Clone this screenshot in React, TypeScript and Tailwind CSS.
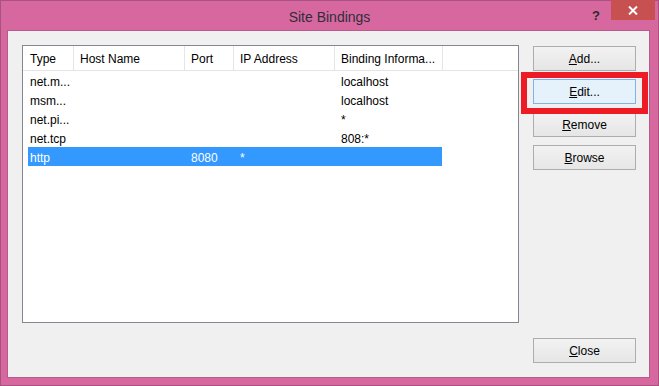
const font = { fontFamily: '"Liberation Sans", Arial, sans-serif' };

type Row = {
  type: string;
  host: string;
  port: string;
  ip: string;
  binding: string;
  selected?: boolean;
};

const rows: Row[] = [
  { type: "net.m...", host: "", port: "", ip: "", binding: "localhost" },
  { type: "msm...", host: "", port: "", ip: "", binding: "localhost" },
  { type: "net.pi...", host: "", port: "", ip: "", binding: "*" },
  { type: "net.tcp", host: "", port: "", ip: "", binding: "808:*" },
  { type: "http", host: "", port: "8080", ip: "*", binding: "", selected: true },
];

function DialogButton({
  label,
  hotkey,
  focused,
}: {
  label: string;
  hotkey: string;
  focused?: boolean;
}) {
  return (
    <button
      className={
        "w-[103px] h-[25px] flex items-center justify-center text-[12px] text-black border " +
        (focused
          ? "border-[#7EB4EA] bg-[#E5F1FB]"
          : "border-[#ADADAD] bg-gradient-to-b from-[#F2F2F2] to-[#E6E6E6]")
      }
    >
      <span className="underline">{hotkey}</span>
      {label}
    </button>
  );
}

export default function App() {
  return (
    <div className="w-[659px] h-[386px] bg-white" style={font}>
      <div className="w-[659px] h-[386px] bg-[#D7689F] border border-[#A9527F] flex flex-col">
        {/* TITLE BAR */}
        <div className="h-[29px] flex items-start">
          <div className="w-[77px]" />
          <div className="flex-1 text-center text-[14px] text-[#2E2E3A] pt-[6px]">
            Site Bindings
          </div>
          <div className="w-[77px] flex items-start">
            <span className="w-[30px] text-center text-[13px] font-bold text-[#2A2A2A] pt-[5px]">?</span>
            <div className="w-[44px] h-[20px] -mt-[1px] bg-[#C75050] flex items-center justify-center">
              <svg width="10" height="9" viewBox="0 0 10 9">
                <path d="M1 0.5 L9 8.5 M9 0.5 L1 8.5" stroke="white" strokeWidth="2" />
              </svg>
            </div>
          </div>
        </div>

        {/* CLIENT */}
        <div className="ml-[6px] w-[643px] h-[348px] bg-[#F0F0F0] border border-[#B85A8C] flex pl-[14px] pt-[14px] pb-[14px] relative">
          {/* LIST */}
          <div className="w-[497px] h-[278px] bg-white border border-[#828790] text-[12px] text-black">
            <div className="h-[25px] flex border-b border-[#E5E5E5]">
              <div className="w-[51px] pl-[7px] pt-[2px] border-r border-[#E5E5E5] flex items-center">Type</div>
              <div className="w-[111px] pl-[6px] pt-[2px] border-r border-[#E5E5E5] flex items-center">Host Name</div>
              <div className="w-[49px] pl-[6px] pt-[2px] border-r border-[#E5E5E5] flex items-center">Port</div>
              <div className="w-[101px] pl-[6px] pt-[2px] border-r border-[#E5E5E5] flex items-center">IP Address</div>
              <div className="w-[108px] pl-[6px] pt-[2px] border-r border-[#E5E5E5] flex items-center">Binding Informa...</div>
            </div>
            {rows.map((r, i) => (
              <div
                key={i}
                className={
                  "h-[19px] ml-[5px] w-[414px] flex items-center pt-[2px] " +
                  (r.selected ? "bg-[#3399FF] text-white" : "")
                }
              >
                <div className="w-[46px] pl-[2px]">{r.type}</div>
                <div className="w-[111px] pl-[6px]">{r.host}</div>
                <div className="w-[49px] pl-[6px]">{r.port}</div>
                <div className="w-[101px] pl-[6px]">{r.ip}</div>
                <div className="w-[107px] pl-[6px]">{r.binding}</div>
              </div>
            ))}
          </div>

          {/* BUTTONS */}
          <div className="ml-[14px] pt-[1px] flex flex-col gap-[8px]">
            <DialogButton hotkey="A" label="dd..." />
            <DialogButton hotkey="E" label="dit..." focused />
            <DialogButton hotkey="R" label="emove" />
            <DialogButton hotkey="B" label="rowse" />
            <div className="mt-auto">
              <DialogButton hotkey="C" label="lose" />
            </div>
          </div>

          {/* annotation */}
          <div className="absolute left-[513px] top-[41px] w-[127px] h-[42px] border-[6px] border-[#ED1C24]" />
        </div>
      </div>
    </div>
  );
}
